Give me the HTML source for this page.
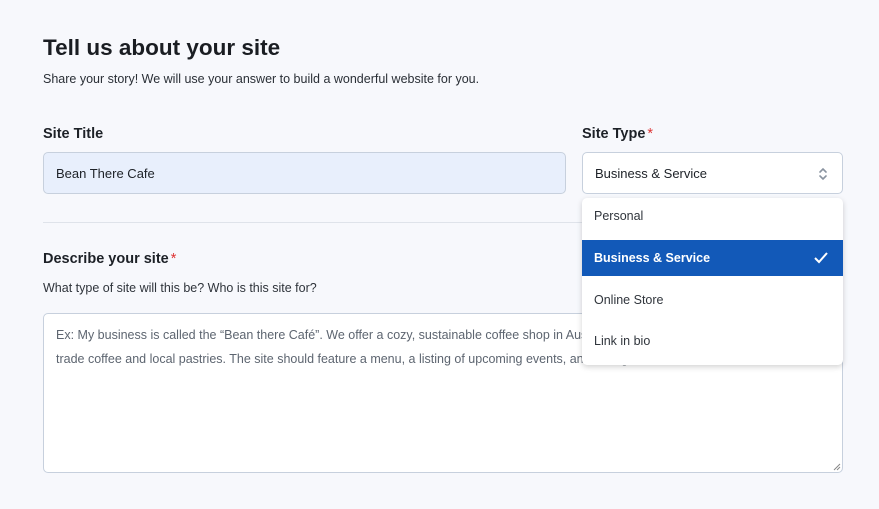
<!DOCTYPE html>
<html><head><meta charset="utf-8"><style>
*{box-sizing:border-box;margin:0;padding:0}
body{width:879px;height:509px;background:#f7f8fc;font-family:"Liberation Sans",sans-serif;color:#1d2127;position:relative;overflow:hidden}
.a{position:absolute}
h1{position:absolute;left:43px;top:35px;font-size:22.5px;font-weight:600;color:#1a1d22}
.sub{left:43px;top:72px;font-size:12.5px;color:#2a2f36}
.lab{font-size:14.5px;font-weight:600;color:#1d2127}
.star{color:#d33;font-weight:400;margin-left:2px}
.inp{border:1px solid #c7d0dd;border-radius:5px;font-size:13px;padding-left:12px;display:flex;align-items:center}
.dd{left:582px;top:198px;width:261px;height:167px;background:#fff;border-radius:5px;box-shadow:0 2px 6px rgba(0,0,0,.18);overflow:hidden}
.it{position:absolute;left:0;width:261px;font-size:12.5px;padding-left:12px;color:#30353c}
</style></head><body>
<h1>Tell us about your site</h1>
<div class="a sub">Share your story! We will use your answer to build a wonderful website for you.</div>
<div class="a lab" style="left:43px;top:126px">Site Title</div>
<div class="a lab" style="left:582px;top:126px">Site Type<span class="star">*</span></div>
<div class="a inp" style="left:43px;top:152px;width:523px;height:42px;background:#e8effc">Bean There Cafe</div>
<div class="a inp" style="left:582px;top:152px;width:261px;height:42px;background:#fff">Business &amp; Service
<svg class="a" style="right:14px;top:13px" width="10" height="16" viewBox="0 0 10 16"><path d="M2 6l3-3 3 3M2 10l3 3 3-3" fill="none" stroke="#8a93a0" stroke-width="1.6" stroke-linecap="round"/></svg></div>
<div class="a" style="left:43px;top:222px;width:800px;height:1px;background:#dfe3ea"></div>
<div class="a lab" style="left:43px;top:251px">Describe your site<span class="star">*</span></div>
<div class="a" style="left:43px;top:281px;font-size:12.5px;color:#2f343b">What type of site will this be? Who is this site for?</div>
<div class="a" style="left:43px;top:313px;width:800px;height:160px;background:#fff;border:1px solid #c7d0dd;border-radius:5px;padding:9px 12px;font-size:12.5px;line-height:24px;color:#5d6570;white-space:nowrap">Ex: My business is called the “Bean there Café”. We offer a cozy, sustainable coffee shop in Austin featuring fair<br>trade coffee and local pastries. The site should feature a menu, a listing of upcoming events, and a blog.
<svg class="a" style="right:1px;bottom:1px" width="8" height="8" viewBox="0 0 8 8"><path d="M7 1L1 7M7 4L4 7" stroke="#888" stroke-width="1"/></svg></div>
<div class="a dd">
<div class="it" style="top:11px">Personal</div>
<div class="it" style="top:42px;height:36px;line-height:36px;background:#1259b8;color:#fff;font-weight:700">Business &amp; Service
<svg class="a" style="right:14px;top:11px" width="16" height="14" viewBox="0 0 16 14"><path d="M2 7l4 4 8-9" fill="none" stroke="#fff" stroke-width="2"/></svg></div>
<div class="it" style="top:95px">Online Store</div>
<div class="it" style="top:136px">Link in bio</div>
</div>
</body></html>
